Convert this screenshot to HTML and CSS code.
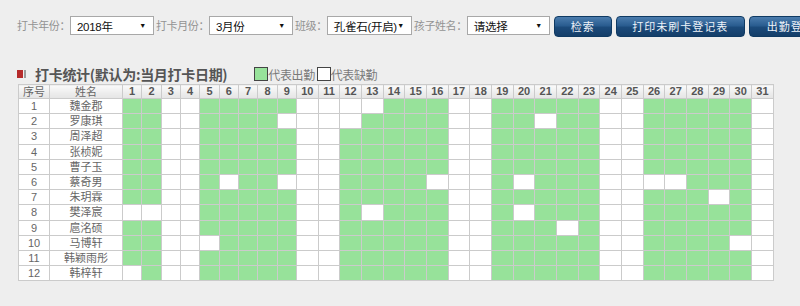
FILE: index.html
```html
<!DOCTYPE html>
<html lang="zh-CN">
<head>
<meta charset="utf-8">
<title>打卡统计</title>
<link rel="stylesheet" href="styles.css">
</head>
<body>
<div class="toolbar">
  <span class="label">打卡年份：</span>
  <div class="select w84"><span class="val">2018年</span><span class="arrow">▼</span></div>
  <span class="label">打卡月份：</span>
  <div class="select w84"><span class="val">3月份</span><span class="arrow">▼</span></div>
  <span class="label">班级：</span>
  <div class="select w85"><span class="val">孔雀石(开启)</span><span class="arrow">▼</span></div>
  <span class="label">孩子姓名：</span>
  <div class="select w83"><span class="val">请选择</span><span class="arrow">▼</span></div>
  <button class="btn b1">检索</button>
  <button class="btn b2">打印未刷卡登记表</button>
  <button class="btn b3">出勤登记表</button>
</div>

<div class="title-row">
  <span class="mark"><i class="red"></i><i class="grey"></i></span>
  <h2 class="title">打卡统计(默认为:当月打卡日期)</h2>
  <span class="legend"><i class="box on"></i>代表出勤<i class="box off"></i>代表缺勤</span>
</div>

<table class="grid">
  <colgroup>
    <col class="c-no"><col class="c-name">
    <col class="c-d1"><col class="c-d1"><col class="c-d1"><col class="c-d1"><col class="c-d1"><col class="c-d1"><col class="c-d1"><col class="c-d1"><col class="c-d1">
    <col class="c-d2"><col class="c-d2"><col class="c-d2"><col class="c-d2"><col class="c-d2"><col class="c-d2"><col class="c-d2"><col class="c-d2"><col class="c-d2"><col class="c-d2"><col class="c-d2"><col class="c-d2"><col class="c-d2"><col class="c-d2"><col class="c-d2"><col class="c-d2"><col class="c-d2"><col class="c-d2"><col class="c-d2"><col class="c-d2"><col class="c-d2"><col class="c-d2">
  </colgroup>
  <thead>
    <tr><th class="hz">序号</th><th class="hz">姓名</th><th>1</th><th>2</th><th>3</th><th>4</th><th>5</th><th>6</th><th>7</th><th>8</th><th>9</th><th>10</th><th>11</th><th>12</th><th>13</th><th>14</th><th>15</th><th>16</th><th>17</th><th>18</th><th>19</th><th>20</th><th>21</th><th>22</th><th>23</th><th>24</th><th>25</th><th>26</th><th>27</th><th>28</th><th>29</th><th>30</th><th>31</th></tr>
  </thead>
  <tbody>
    <tr><td>1</td><td>魏金郡</td><td class="g"></td><td class="g"></td><td></td><td></td><td class="g"></td><td class="g"></td><td class="g"></td><td class="g"></td><td class="g"></td><td></td><td></td><td></td><td></td><td class="g"></td><td class="g"></td><td class="g"></td><td></td><td></td><td class="g"></td><td class="g"></td><td class="g"></td><td class="g"></td><td class="g"></td><td></td><td></td><td class="g"></td><td class="g"></td><td class="g"></td><td class="g"></td><td class="g"></td><td></td></tr>
    <tr><td>2</td><td>罗康琪</td><td class="g"></td><td class="g"></td><td></td><td></td><td class="g"></td><td class="g"></td><td class="g"></td><td class="g"></td><td></td><td></td><td></td><td></td><td class="g"></td><td class="g"></td><td class="g"></td><td class="g"></td><td></td><td></td><td class="g"></td><td class="g"></td><td></td><td class="g"></td><td class="g"></td><td></td><td></td><td class="g"></td><td class="g"></td><td class="g"></td><td class="g"></td><td class="g"></td><td></td></tr>
    <tr><td>3</td><td>周泽超</td><td class="g"></td><td class="g"></td><td></td><td></td><td class="g"></td><td class="g"></td><td class="g"></td><td class="g"></td><td class="g"></td><td></td><td></td><td class="g"></td><td class="g"></td><td class="g"></td><td class="g"></td><td class="g"></td><td></td><td></td><td class="g"></td><td class="g"></td><td class="g"></td><td class="g"></td><td class="g"></td><td></td><td></td><td class="g"></td><td class="g"></td><td class="g"></td><td class="g"></td><td class="g"></td><td></td></tr>
    <tr><td>4</td><td>张桢妮</td><td class="g"></td><td class="g"></td><td></td><td></td><td class="g"></td><td class="g"></td><td class="g"></td><td class="g"></td><td class="g"></td><td></td><td></td><td class="g"></td><td class="g"></td><td class="g"></td><td class="g"></td><td class="g"></td><td></td><td></td><td class="g"></td><td class="g"></td><td class="g"></td><td class="g"></td><td class="g"></td><td></td><td></td><td class="g"></td><td class="g"></td><td class="g"></td><td class="g"></td><td class="g"></td><td></td></tr>
    <tr><td>5</td><td>曹子玉</td><td class="g"></td><td class="g"></td><td></td><td></td><td class="g"></td><td class="g"></td><td class="g"></td><td class="g"></td><td class="g"></td><td></td><td></td><td class="g"></td><td class="g"></td><td class="g"></td><td class="g"></td><td class="g"></td><td></td><td></td><td class="g"></td><td class="g"></td><td class="g"></td><td class="g"></td><td class="g"></td><td></td><td></td><td class="g"></td><td class="g"></td><td class="g"></td><td class="g"></td><td class="g"></td><td></td></tr>
    <tr><td>6</td><td>蔡奇男</td><td class="g"></td><td class="g"></td><td></td><td></td><td class="g"></td><td></td><td class="g"></td><td class="g"></td><td></td><td></td><td></td><td class="g"></td><td class="g"></td><td class="g"></td><td class="g"></td><td></td><td></td><td></td><td class="g"></td><td></td><td class="g"></td><td class="g"></td><td class="g"></td><td></td><td></td><td></td><td></td><td class="g"></td><td class="g"></td><td class="g"></td><td></td></tr>
    <tr><td>7</td><td>朱玥霖</td><td class="g"></td><td class="g"></td><td></td><td></td><td class="g"></td><td class="g"></td><td class="g"></td><td class="g"></td><td class="g"></td><td></td><td></td><td class="g"></td><td class="g"></td><td class="g"></td><td class="g"></td><td class="g"></td><td></td><td></td><td class="g"></td><td class="g"></td><td class="g"></td><td class="g"></td><td class="g"></td><td></td><td></td><td class="g"></td><td class="g"></td><td class="g"></td><td></td><td class="g"></td><td></td></tr>
    <tr><td>8</td><td>樊泽宸</td><td></td><td></td><td></td><td></td><td class="g"></td><td class="g"></td><td class="g"></td><td class="g"></td><td class="g"></td><td></td><td></td><td class="g"></td><td></td><td class="g"></td><td class="g"></td><td class="g"></td><td></td><td></td><td class="g"></td><td></td><td class="g"></td><td class="g"></td><td class="g"></td><td></td><td></td><td class="g"></td><td class="g"></td><td class="g"></td><td class="g"></td><td class="g"></td><td></td></tr>
    <tr><td>9</td><td>扈洺硕</td><td class="g"></td><td class="g"></td><td></td><td></td><td class="g"></td><td class="g"></td><td class="g"></td><td class="g"></td><td class="g"></td><td></td><td></td><td class="g"></td><td class="g"></td><td class="g"></td><td class="g"></td><td class="g"></td><td></td><td></td><td class="g"></td><td class="g"></td><td class="g"></td><td></td><td class="g"></td><td></td><td></td><td class="g"></td><td class="g"></td><td class="g"></td><td class="g"></td><td class="g"></td><td></td></tr>
    <tr><td>10</td><td>马博轩</td><td class="g"></td><td class="g"></td><td></td><td></td><td></td><td class="g"></td><td class="g"></td><td class="g"></td><td class="g"></td><td></td><td></td><td class="g"></td><td class="g"></td><td class="g"></td><td class="g"></td><td class="g"></td><td></td><td></td><td class="g"></td><td class="g"></td><td class="g"></td><td class="g"></td><td class="g"></td><td></td><td></td><td class="g"></td><td class="g"></td><td class="g"></td><td class="g"></td><td></td><td></td></tr>
    <tr><td>11</td><td>韩颖雨彤</td><td class="g"></td><td class="g"></td><td></td><td></td><td class="g"></td><td class="g"></td><td class="g"></td><td class="g"></td><td class="g"></td><td></td><td></td><td class="g"></td><td class="g"></td><td class="g"></td><td class="g"></td><td class="g"></td><td></td><td></td><td class="g"></td><td class="g"></td><td class="g"></td><td class="g"></td><td class="g"></td><td></td><td></td><td class="g"></td><td class="g"></td><td class="g"></td><td class="g"></td><td class="g"></td><td></td></tr>
    <tr><td>12</td><td>韩梓轩</td><td></td><td class="g"></td><td></td><td></td><td class="g"></td><td class="g"></td><td class="g"></td><td class="g"></td><td class="g"></td><td></td><td></td><td class="g"></td><td class="g"></td><td class="g"></td><td class="g"></td><td class="g"></td><td></td><td></td><td class="g"></td><td class="g"></td><td class="g"></td><td class="g"></td><td class="g"></td><td></td><td></td><td class="g"></td><td class="g"></td><td class="g"></td><td class="g"></td><td class="g"></td><td></td></tr>
  </tbody>
</table>
</body>
</html>
```

FILE: styles.css
```css
html, body {
  margin: 0;
  padding: 0;
  background: #eeeeee;
  font-family: "Liberation Sans", "Noto Sans CJK SC", sans-serif;
  color: #555;
}

.toolbar {
  display: flex;
  align-items: flex-start;
  padding: 16px 0 0 17px;
  white-space: nowrap;
  overflow: hidden;
}

.toolbar > * {
  flex: none;
}

.label {
  font-family: "Noto Sans CJK SC", sans-serif;
  font-size: 11px;
  letter-spacing: -0.4px;
  line-height: 19px;
  color: #939393;
}

.select {
  box-sizing: border-box;
  height: 19px;
  border: 1px solid #a8a8a8;
  background: #fff;
  display: flex;
  align-items: center;
  justify-content: space-between;
  padding: 0 7px 0 6px;
  margin-right: 2px;
  font-family: "Liberation Sans", "Noto Sans CJK SC", sans-serif;
  font-size: 11.5px;
  letter-spacing: -0.3px;
  color: #111;
}

.w84 { width: 84px; }
.w85 { width: 85px; }
.w83 { width: 83px; }

.arrow {
  font-size: 7px;
  color: #111;
}

.btn {
  box-sizing: border-box;
  height: 21px;
  margin: 0 2px;
  border: 1px solid #0f3a63;
  border-radius: 4px;
  background: linear-gradient(#4b7cad 0%, #2a5d90 45%, #1b4a7a 55%, #143e69 100%);
  color: #eef3f9;
  font-family: "Noto Sans CJK SC", sans-serif;
  font-size: 11px;
  letter-spacing: 1px;
  line-height: 19px;
  padding: 0;
}

.b1 { width: 58px; }
.b2 { width: 129px; }
.b3 { width: 96px; }

.title-row {
  display: flex;
  align-items: center;
  margin: 29px 0 0 17px;
  height: 16px;
}

.mark {
  display: flex;
  align-items: center;
  margin-right: 9px;
}

.mark i {
  display: block;
  height: 8px;
}

.mark .red {
  width: 6px;
  background: #b52a2a;
  margin-right: 1px;
}

.mark .grey {
  width: 2px;
  background: #9a9a9a;
}

.title {
  margin: 0;
  font-family: "Noto Sans CJK SC", sans-serif;
  font-size: 14px;
  font-weight: bold;
  letter-spacing: -0.3px;
  color: #555;
  line-height: 16px;
}

.legend {
  display: flex;
  align-items: center;
  margin-left: 27px;
  font-family: "Noto Sans CJK SC", sans-serif;
  font-size: 12px;
  letter-spacing: -0.4px;
  color: #7a7a7a;
}

.legend .box {
  display: block;
  box-sizing: border-box;
  width: 14px;
  height: 14px;
  border: 1px solid #444;
}

.legend .on { background: #97e29a; }
.legend .off { background: #fff; margin-left: 2px; }

.grid {
  margin: 2px 0 0 18px;
  width: 755px;
  table-layout: fixed;
  border-collapse: collapse;
  background: #fff;
}

.c-no { width: 31px; }
.c-name { width: 73px; }
.c-d1 { width: 19.33px; }
.c-d2 { width: 21.68px; }

.grid th, .grid td {
  border: 1px solid #cbcbcb;
  padding: 0;
  text-align: center;
  overflow: hidden;
  white-space: nowrap;
}

.grid th {
  height: 13px;
  line-height: 13px;
  background: linear-gradient(#fafafa, #e4e4e4);
  font-family: "Liberation Sans", sans-serif;
  font-size: 11px;
  font-weight: bold;
  color: #555;
}

.grid th.hz {
  font-family: "Noto Sans CJK SC", sans-serif;
  font-size: 11px;
  font-weight: normal;
  color: #666;
}

.grid td {
  height: 14.2px;
  line-height: 14px;
  font-family: "Liberation Sans", "Noto Sans CJK SC", sans-serif;
  font-size: 11px;
  color: #666;
}

.grid td.g {
  background: #97e29a;
}
```
